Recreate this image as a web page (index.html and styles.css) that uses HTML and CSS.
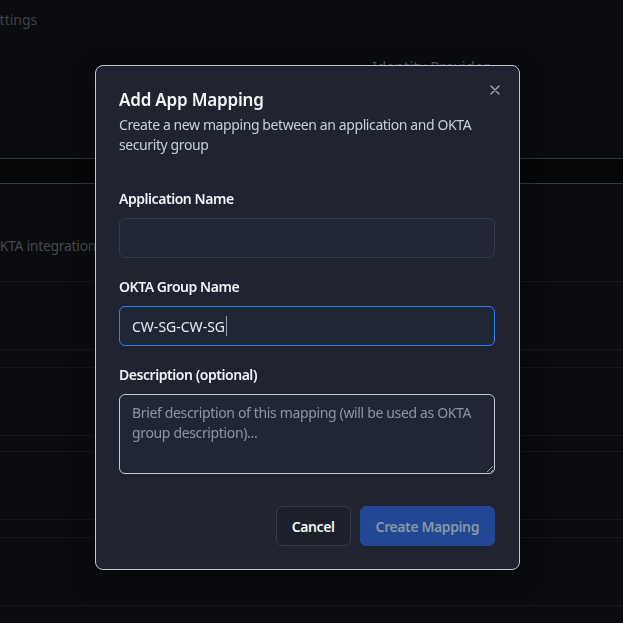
FILE: index.html
```html
<!DOCTYPE html>
<html lang="en">
<head>
<meta charset="utf-8">
<title>Add App Mapping</title>
<link rel="stylesheet" href="styles.css">
</head>
<body>
<div class="page">
  <div class="crumbs"><span class="crumb">Settings</span></div>
  <div class="section-head"><span class="section-title">Identity Provider</span></div>
  <div class="table">
    <div class="thead"></div>
    <div class="row row-first"><span class="cell-text">OKTA integration settings</span></div>
    <div class="row row-a"></div>
    <div class="row row-b"></div>
    <div class="row row-a"></div>
    <div class="row row-c"></div>
    <div class="row row-a"></div>
    <div class="row row-b"></div>
    <div class="row row-a"></div>
    <div class="row row-b"></div>
  </div>
</div>

<div class="overlay">
  <div class="modal" role="dialog" aria-labelledby="modal-title">
    <button class="close" type="button" aria-label="Close">
      <svg width="10" height="10" viewBox="0 0 10 10"><path d="M1 1L9 9M9 1L1 9" stroke="currentColor" stroke-width="1.4" stroke-linecap="round"/></svg>
    </button>
    <h2 class="title" id="modal-title">Add App Mapping</h2>
    <p class="subtitle">Create a new mapping between an application and OKTA security group</p>
    <form class="form">
      <div class="field">
        <label class="label" for="app">Application Name</label>
        <input class="input" id="app" type="text">
      </div>
      <div class="field">
        <label class="label" for="grp">OKTA Group Name</label>
        <div class="input-wrap">
          <input class="input input-focus" id="grp" type="text" value="CW-SG-CW-SG">
          <span class="caret"></span>
        </div>
      </div>
      <div class="field">
        <label class="label" for="desc">Description (optional)</label>
        <textarea class="textarea" id="desc" placeholder="Brief description of this mapping (will be used as OKTA group description)..."></textarea>
      </div>
      <div class="actions">
        <button class="btn btn-cancel" type="button">Cancel</button>
        <button class="btn btn-primary" type="button" disabled>Create Mapping</button>
      </div>
    </form>
  </div>
</div>
</body>
</html>
```

FILE: styles.css
```css
* { box-sizing: border-box; }

html, body {
  margin: 0;
  height: 100%;
  background: #0a0c10;
  font-family: "Noto Sans", "Open Sans", sans-serif;
  overflow: hidden;
}

.page {
  padding-top: 10px;
  color: #3f434a;
  font-size: 14px;
  line-height: 20px;
}

.crumbs { height: 20px; }
.crumb { display: inline-block; margin-left: -16px; }

.section-head {
  margin-top: 26px;
  padding-left: 372px;
  height: 20px;
}
.section-title { color: #55595f; font-size: 15px; }

.table { margin-top: 82px; }

.thead {
  height: 26px;
  background: #050608;
  border-top: 1px solid #34373c;
  border-bottom: 1px solid #34373c;
}

.row { border-bottom: 1px solid #16181c; }
.row-first { height: 98px; padding-top: 52px; }
.row-a { height: 68px; }
.row-b { height: 18px; }
.row-c { height: 16px; }

.cell-text {
  display: inline-block;
  margin-left: -11px;
  color: #45494f;
  white-space: nowrap;
  letter-spacing: -0.3px;
}

.overlay {
  position: fixed;
  inset: 0;
}

.modal {
  position: absolute;
  left: 95px;
  top: 65px;
  width: 425px;
  background: #1f2430;
  border: 1px solid #c3c7cd;
  border-radius: 8px;
  padding: 20px 24px 23px 23px;
  box-shadow: 0 8px 24px rgba(0, 0, 0, 0.5);
}

.close {
  position: absolute;
  top: 19px;
  right: 19px;
  width: 10px;
  height: 10px;
  padding: 0;
  border: 0;
  background: none;
  color: #a2a8b1;
  display: flex;
}

.title {
  margin: 0;
  font-size: 17px;
  line-height: 28px;
  font-weight: 600;
  letter-spacing: -0.2px;
  color: #f3f5f8;
}

.subtitle {
  margin: 1px 0 0;
  font-size: 14px;
  line-height: 20px;
  letter-spacing: -0.4px;
  color: #c9d0da;
}

.form {
  margin-top: 34px;
  display: flex;
  flex-direction: column;
  gap: 19px;
}

.field { display: flex; flex-direction: column; gap: 9px; }

.label {
  font-size: 14px;
  line-height: 20px;
  font-weight: 600;
  letter-spacing: -0.45px;
  color: #f0f3f6;
}

.input-wrap { position: relative; display: flex; }

.input {
  width: 100%;
  height: 40px;
  padding: 0 12px;
  background: #1f2735;
  border: 1px solid #323a47;
  border-radius: 6px;
  color: #e8edf3;
  font: 14px "Noto Sans", "Open Sans", sans-serif;
  outline: none;
}

.input-focus { border-color: #2f81f7; }

.caret {
  position: absolute;
  left: 107px;
  top: 10px;
  width: 1px;
  height: 20px;
  background: #9aa1ab;
}

.textarea {
  width: 100%;
  height: 80px;
  padding: 8px 12px;
  background: #1f2735;
  border: 1px solid #c6cad0;
  border-radius: 6px;
  color: #e8edf3;
  font: 14px/20px "Noto Sans", "Open Sans", sans-serif;
  letter-spacing: -0.35px;
  resize: vertical;
  outline: none;
  display: block;
}
.textarea::placeholder { color: #8a95a3; }

.actions {
  margin-top: 13px;
  display: flex;
  justify-content: flex-end;
  gap: 9px;
}

.btn {
  height: 40px;
  padding: 0 15px;
  border-radius: 6px;
  font: 600 14px "Noto Sans", "Open Sans", sans-serif;
  letter-spacing: -0.4px;
}

.btn-cancel {
  background: #1b202a;
  border: 1px solid #353b46;
  color: #f3f5f8;
}

.btn-primary {
  background: #214795;
  border: 1px solid #214795;
  color: #8b95a4;
}
```
